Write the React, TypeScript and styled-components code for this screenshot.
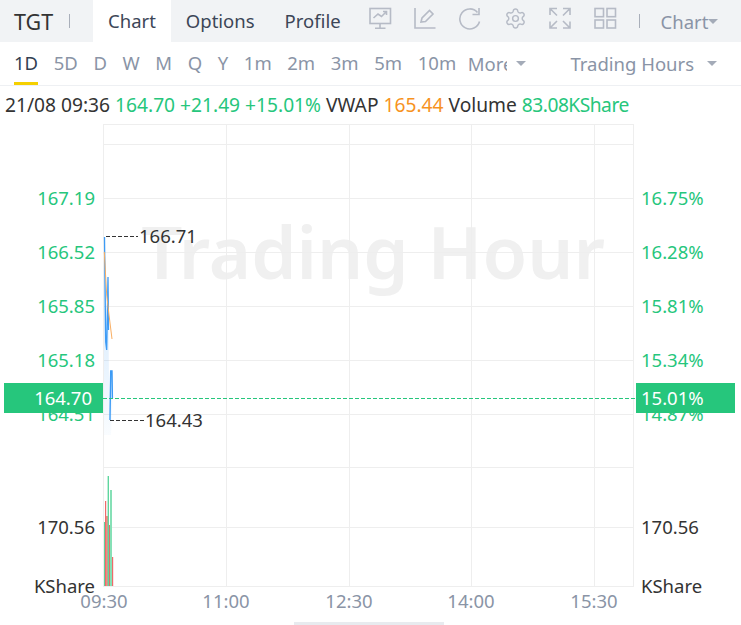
import React from 'react';
import styled, { createGlobalStyle } from 'styled-components';
import { Settings } from 'lucide-react';

const GREEN = '#26c67c';
const FONT = `"Noto Sans", "Open Sans", sans-serif`;
const ICON = '#b6bbc6';

const GlobalStyle = createGlobalStyle`
  html, body { margin: 0; padding: 0; background: #fff; overflow: hidden; }
  body { font-family: ${FONT}; }
`;

const periods = ['1D', '5D', 'D', 'W', 'M', 'Q', 'Y', '1m', '2m', '3m', '5m', '10m'];
const priceRows = [
  { y: 198, price: '167.19', pct: '16.75%' },
  { y: 252, price: '166.52', pct: '16.28%' },
  { y: 306, price: '165.85', pct: '15.81%' },
  { y: 360, price: '165.18', pct: '15.34%' },
  { y: 414, price: '164.51', pct: '14.87%' },
];
const hLines = [124, 144, 198, 252, 306, 360, 414, 467, 527, 586];
const vLines = [103, 226, 349, 471, 594, 633];
const times = [
  { x: 104, t: '09:30' },
  { x: 226, t: '11:00' },
  { x: 349, t: '12:30' },
  { x: 471, t: '14:00' },
  { x: 594, t: '15:30' },
];
const bars = [
  { x: 104, w: 1.4, top: 522, c: '#5fd69f' },
  { x: 105, w: 1.2, top: 501, c: '#ee6a6a' },
  { x: 106, w: 2, top: 516, c: '#f08a84' },
  { x: 107.6, w: 1.4, top: 476, c: '#5fd69f' },
  { x: 109, w: 1.2, top: 525, c: '#d9736c' },
  { x: 110, w: 2, top: 490, c: '#86e0b6' },
  { x: 112, w: 1.2, top: 557, c: '#ee6a6a' },
];

const Page = styled.div`
  width: 741px;
  height: 625px;
  position: relative;
  overflow: hidden;
  background: #fff;
  color: #333;
`;

const TopBar = styled.div`
  height: 42px;
  display: flex;
  align-items: center;
  background: #f1f3f5;
`;

const Symbol = styled.div`
  width: 55px;
  padding-left: 14px;
  font-size: 21.5px;
  color: #333;
`;

const Sep = styled.span`
  width: 1px;
  height: 14px;
  background: #a9afba;
`;

const Tabs = styled.div`
  display: flex;
  height: 42px;
  margin-left: 23px;
`;

const Tab = styled.div<{ $active?: boolean }>`
  padding: 0 15px;
  line-height: 42px;
  font-size: 18.5px;
  background: ${(p) => (p.$active ? '#fff' : 'transparent')};
  color: #3c4657;
`;

const Tools = styled.div`
  display: flex;
  align-items: center;
  gap: 22px;
  margin-left: 13px;
  svg {
    display: block;
    margin-top: -5px;
  }
`;

const ChartType = styled.div`
  display: flex;
  align-items: center;
  font-size: 18.5px;
  color: #8a94a6;
  margin-left: 21px;
`;

const Caret = styled.i`
  display: inline-block;
  width: 0;
  height: 0;
  border-style: solid;
  border-width: 5px 5px 0;
  border-color: #a4abb8 transparent transparent;
`;

const PeriodBar = styled.div`
  height: 44px;
  box-sizing: border-box;
  display: flex;
  align-items: stretch;
  padding-left: 14px;
  gap: 15.6px;
  border-bottom: 1px solid #eef0f3;
`;

const Period = styled.div<{ $active?: boolean }>`
  line-height: 42px;
  font-size: 18.5px;
  color: ${(p) => (p.$active ? '#333f52' : '#8a94a6')};
  box-shadow: ${(p) => (p.$active ? 'inset 0 -3px 0 #f5d000' : 'none')};
`;

const More = styled.div`
  display: flex;
  align-items: center;
  margin-left: -4px;
  font-size: 18.5px;
  color: #8a94a6;
`;

const MoreText = styled.span`
  width: 39px;
  overflow: hidden;
  margin-right: 9px;
`;

const Session = styled.div`
  display: flex;
  align-items: center;
  margin-left: 29px;
  font-size: 18.5px;
  color: #8a94a6;
  gap: 13px;
`;

const InfoRow = styled.div`
  height: 38px;
  box-sizing: border-box;
  padding-left: 5px;
  font-size: 19.2px;
  line-height: 38px;
  white-space: nowrap;
  color: #333;
`;

const Val = styled.span<{ $color?: string; $tight?: boolean }>`
  color: ${(p) => p.$color ?? '#333'};
  letter-spacing: ${(p) => (p.$tight ? '-0.5px' : 'normal')};
`;

const ChartSvg = styled.svg`
  display: block;
  text {
    font-family: ${FONT};
    font-size: 18.5px;
  }
`;

const Watermark = styled.text`
  && {
    font-size: 72.5px;
    font-weight: 600;
  }
  fill: #f0f0f0;
`;

const PriceTag = styled.div<{ $side: 'left' | 'right' }>`
  position: absolute;
  top: 383px;
  ${(p) => (p.$side === 'left' ? 'left: 4px;' : 'left: 636px;')}
  width: 99px;
  height: 30px;
  box-sizing: border-box;
  background: ${GREEN};
  color: #fff;
  font-size: 18.5px;
  line-height: 30px;
  text-align: ${(p) => (p.$side === 'left' ? 'right' : 'left')};
  padding: 0 ${(p) => (p.$side === 'left' ? '11px' : '0')} 0 ${(p) => (p.$side === 'left' ? '0' : '5px')};
`;

const ScrollThumb = styled.div`
  position: absolute;
  left: 294px;
  bottom: 0;
  width: 150px;
  height: 3px;
  background: #e8ebef;
`;

const iconProps = {
  width: 23,
  height: 23,
  viewBox: '0 0 23 23',
  fill: 'none',
  stroke: ICON,
  strokeWidth: 1.6,
};

const MonitorIcon = () => (
  <svg {...iconProps}>
    <rect x="1" y="1.5" width="20.5" height="15" />
    <path d="M4.500 11l4.500-4 3.500 2.500 5-5M14 4.500h3.500V8M11 17v4M6 21.200h10.500" />
  </svg>
);

const EditIcon = () => (
  <svg {...iconProps}>
    <path d="M1 1v20h20.500M7 15l1-4 7.500-7.500 3.500 3.500-7.500 7.500z" />
  </svg>
);

const RedoIcon = () => (
  <svg {...iconProps}>
    <path d="M18.500 5.500a10 10 0 1 0 2 9" />
    <path d="M20 1v6.500h-6.500" />
  </svg>
);

const ExpandIcon = () => (
  <svg {...iconProps}>
    <path d="M1 8V1.500h7M1.500 2L8 8.500M14 1.500h7V8M20.500 2L14 8.500M1 14.500V21h7M1.500 20.500L8 14M14 21h7v-6.500M20.500 20.500L14 14" />
  </svg>
);

const GridIcon = () => (
  <svg {...iconProps}>
    <rect x="1" y="1.500" width="8.500" height="8.200" />
    <rect x="13" y="1.500" width="8.500" height="8.200" />
    <rect x="1" y="13" width="8.500" height="8" />
    <rect x="13" y="13" width="8.500" height="8" />
  </svg>
);

const Chart = () => (
  <ChartSvg width={741} height={501} viewBox="0 124 741 501">
    <defs>
      <linearGradient id="area" x1="0" y1="0" x2="0" y2="1">
        <stop offset="0" stopColor="#3d9bf5" stopOpacity="0.28" />
        <stop offset="1" stopColor="#3d9bf5" stopOpacity="0.03" />
      </linearGradient>
    </defs>
    <Watermark x="373" y="279" textAnchor="middle">
      Trading Hour
    </Watermark>
    {hLines.map((y) => (
      <line key={y} x1="103" x2="634" y1={y + 0.5} y2={y + 0.5} stroke="#eeeeee" />
    ))}
    {vLines.map((x) => (
      <line key={x} x1={x + 0.5} x2={x + 0.5} y1="124" y2="586" stroke="#eeeeee" />
    ))}

    <path d="M104 237L106 342L107 350L108 277L109 381L110 420L111 370L112 370L112.500 398L111 435H104Z" fill="url(#area)" />
    <path d="M104.500 237L105.700 342L106.700 350L108 277L108.500 330" stroke="#3d9bf5" strokeWidth="1.300" fill="none" />
    <path d="M110 420L110.700 371L112 371L112.400 398" stroke="#3d9bf5" strokeWidth="1.400" fill="none" />
    <path d="M104.300 252L106.700 295L109 315L112 339" stroke="#f9ae62" strokeWidth="1" fill="none" />

    <line x1="106" x2="138" y1="236.500" y2="236.500" stroke="#333" strokeDasharray="4 2" />
    <text x="139" y="243" fill="#333">166.71</text>
    <line x1="110" x2="144" y1="420.500" y2="420.500" stroke="#333" strokeDasharray="4 2" />
    <text x="145" y="427" fill="#333">164.43</text>

    {priceRows.map((r) => (
      <g key={r.y}>
        <text x="95" y={r.y + 7} textAnchor="end" fill={GREEN}>{r.price}</text>
        <text x="641" y={r.y + 7} fill={GREEN}>{r.pct}</text>
      </g>
    ))}
    <line x1="103" x2="636" y1="398.500" y2="398.500" stroke={GREEN} strokeDasharray="4 2" />

    {bars.map((b) => (
      <rect key={b.x} x={b.x} y={b.top} width={b.w} height={586 - b.top} fill={b.c} />
    ))}

    <text x="95" y="534" textAnchor="end" fill="#333">170.56</text>
    <text x="641" y="534" fill="#333">170.56</text>
    <text x="95" y="593" textAnchor="end" fill="#333">KShare</text>
    <text x="641" y="593" fill="#333">KShare</text>

    {times.map((t) => (
      <text key={t.t} x={t.x} y="608" textAnchor="middle" fill="#8a94a6">{t.t}</text>
    ))}
  </ChartSvg>
);

export default function App() {
  return (
    <Page>
      <GlobalStyle />
      <TopBar>
        <Symbol>TGT</Symbol>
        <Sep />
        <Tabs>
          <Tab $active>Chart</Tab>
          <Tab>Options</Tab>
          <Tab>Profile</Tab>
        </Tabs>
        <Tools>
          <MonitorIcon />
          <EditIcon />
          <RedoIcon />
          <Settings size={23} color={ICON} strokeWidth={1.5} />
          <ExpandIcon />
          <GridIcon />
          <Sep />
        </Tools>
        <ChartType>
          Chart
          <Caret />
        </ChartType>
      </TopBar>
      <PeriodBar>
        {periods.map((p) => (
          <Period key={p} $active={p === '1D'}>{p}</Period>
        ))}
        <More>
          <MoreText>More</MoreText>
          <Caret />
        </More>
        <Session>
          Trading Hours
          <Caret />
        </Session>
      </PeriodBar>
      <InfoRow>
        21/08 09:36 <Val $color={GREEN}>164.70 +21.49 +15.01%</Val> VWAP <Val $color="#f7931e">165.44</Val> Volume{' '}
        <Val $color={GREEN} $tight>83.08KShare</Val>
      </InfoRow>
      <Chart />
      <PriceTag $side="left">164.70</PriceTag>
      <PriceTag $side="right">15.01%</PriceTag>
      <ScrollThumb />
    </Page>
  );
}
